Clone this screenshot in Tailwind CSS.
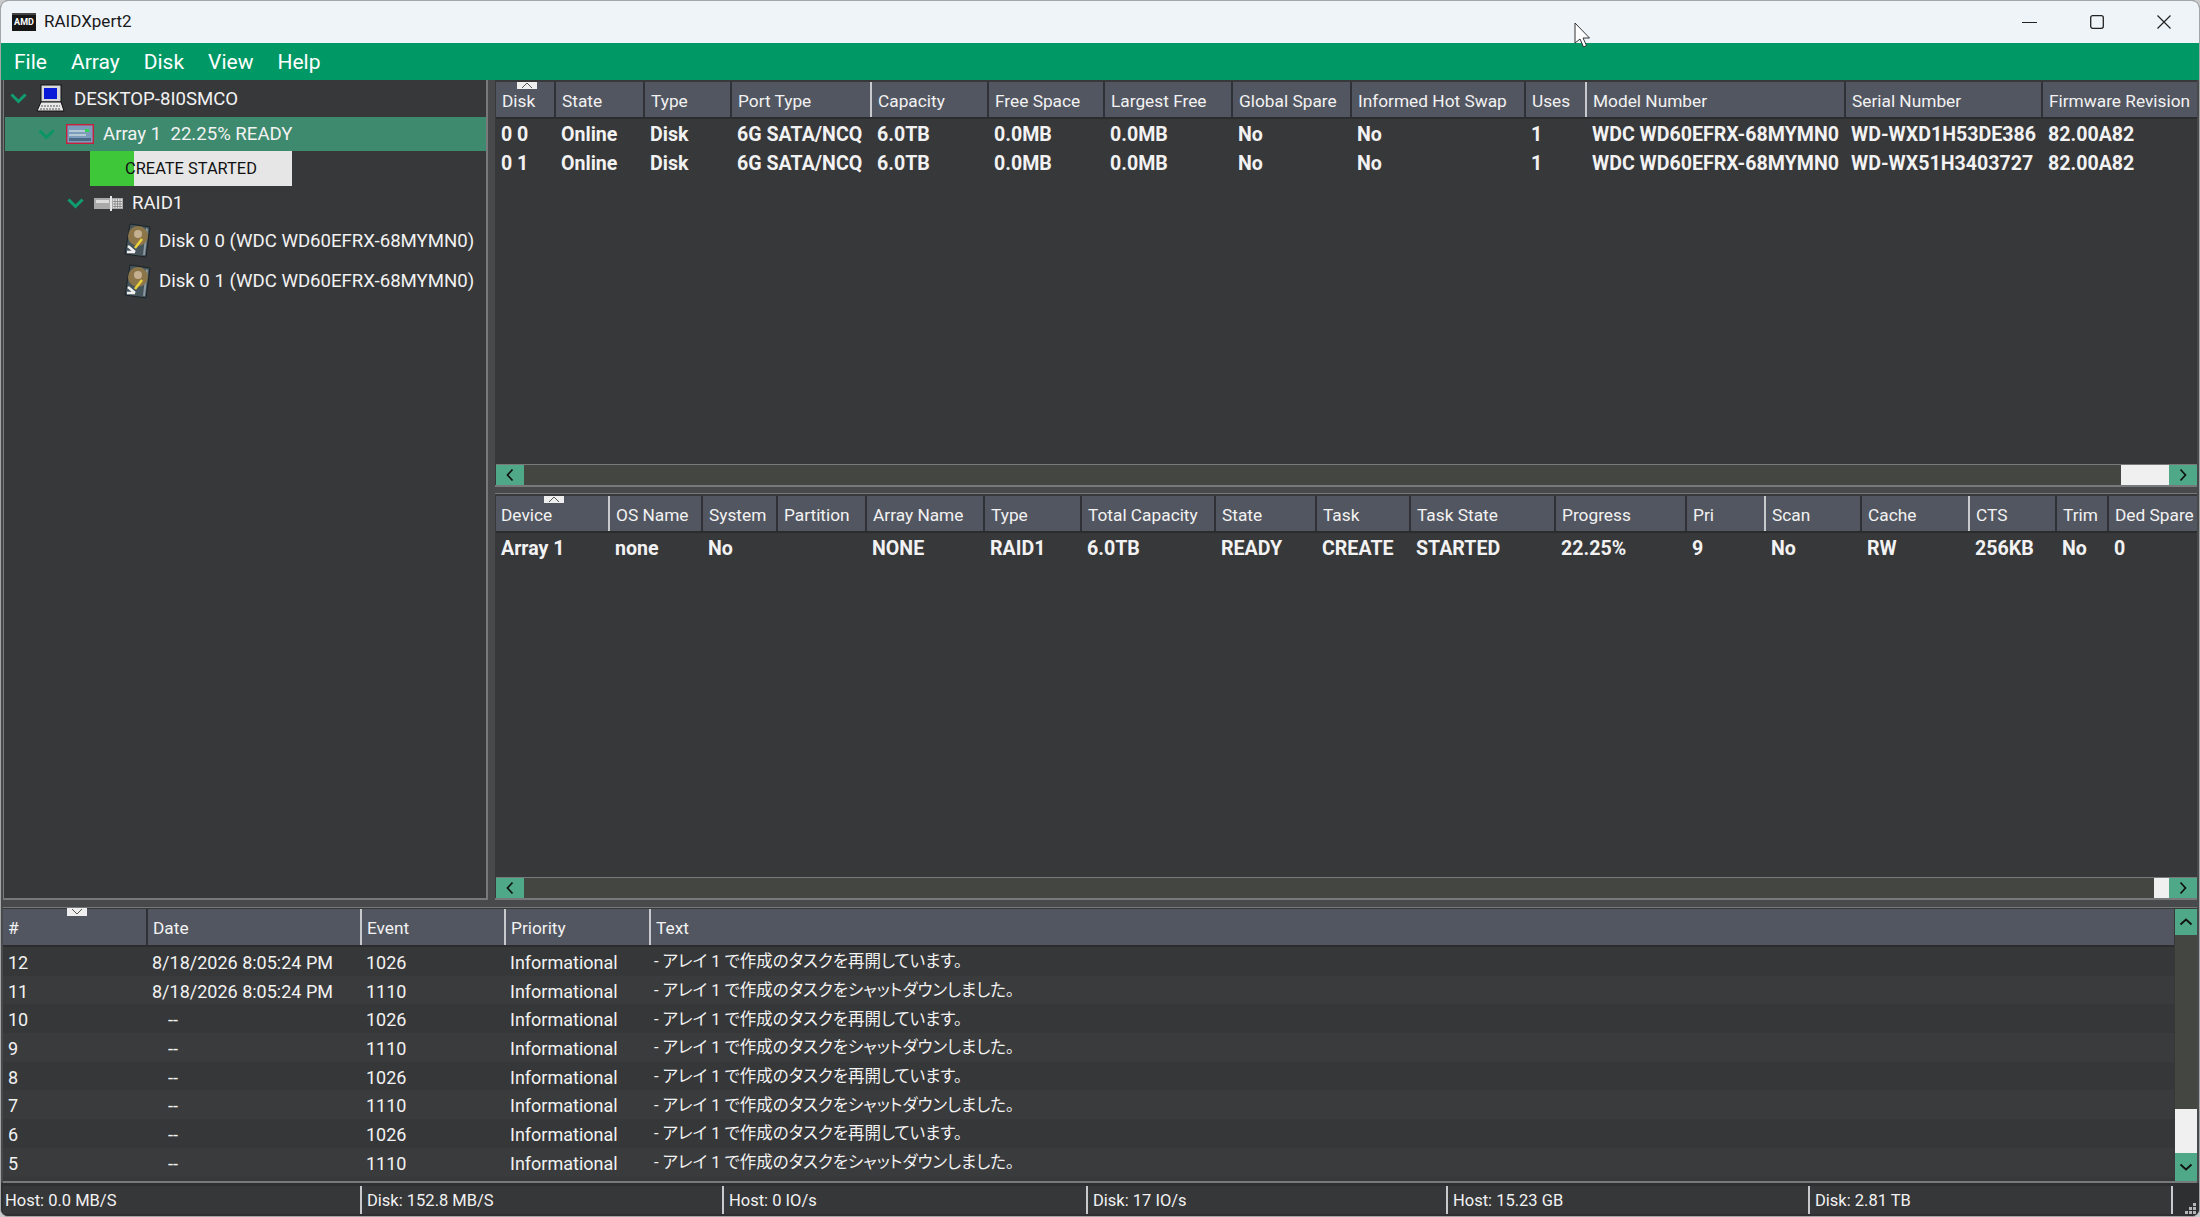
<!DOCTYPE html>
<html lang="en">
  <head>
    <meta charset="UTF-8" />
    <title>RAIDXpert2</title>
    <script src="https://cdn.jsdelivr.net/npm/@tailwindcss/browser@4"></script>
  </head>
  <body class="bg-[#c9cacb]">
    <div class="relative flex flex-col h-[1217px] w-[2200px] overflow-hidden rounded-lg border border-[#a4a5a6] bg-[#47494a] font-['Roboto','Noto_Sans_CJK_JP',sans-serif] text-[17.3px] text-[#f2f2f2]">
      <!-- title bar -->
      <div class="flex items-center h-[42px] shrink-0 bg-[#eff4f9] pl-[11px] text-[#1a1a1a]">
        <div class="flex items-center justify-center w-[24px] h-[18px] bg-[#161616] border-t-2 border-[#444] text-[9px] font-bold text-white">AMD</div>
        <span class="ml-[8px] text-[17px]">RAIDXpert2</span>
        <div class="ml-auto flex items-center pr-[28px] gap-[53px]">
          <svg class="w-[15px] h-[14px]" viewBox="0 0 15 14"><path d="M0 7.5h15" stroke="#222" stroke-width="1.2" /></svg>
          <svg class="w-[14px] h-[14px]" viewBox="0 0 14 14"><rect x="0.7" y="0.7" width="12.6" height="12.6" rx="2" fill="none" stroke="#222" stroke-width="1.3" /></svg>
          <svg class="w-[14px] h-[14px]" viewBox="0 0 14 14"><path d="M0.5 0.5l13 13M13.5 0.5l-13 13" stroke="#222" stroke-width="1.2" /></svg>
        </div>
      </div>
      <!-- mouse cursor -->
      <svg class="absolute left-[1573px] top-[21px] w-[18px] h-[27px]" viewBox="0 0 18 27"><path d="M1 1v20l5-4 3.500 8 3-1.500-3.500-7.500h6.500z" fill="#fff" stroke="#333" stroke-width="1" /></svg>
      <!-- menu -->
      <div class="flex items-center h-[37px] shrink-0 bg-[#009966] pl-[13px] pt-[2px] gap-[24px] text-[21px] text-white">
        <span>File</span><span>Array</span><span>Disk</span><span>View</span><span>Help</span>
      </div>
      <!-- upper panes -->
      <div class="flex h-[820px] shrink-0 pl-[2px] pr-[2px]">
        <!-- tree -->
        <div class="w-[485px] shrink-0 h-full border-r-2 border-b-2 border-l border-[#77797a] bg-[#37383a] text-[18.6px]">
          <div class="flex items-center h-[37px] pl-[6px]">
            <svg class="w-[17px] h-[11px]" viewBox="0 0 17 11"><path d="M1.500 1.500l7 7 7-7" fill="none" stroke="#0f9e70" stroke-width="3" /></svg>
            <svg class="ml-[9px] w-[29px] h-[29px]" viewBox="0 0 29 29">
              <rect x="5" y="1" width="20" height="17" fill="#d8d8d8" stroke="#111" />
              <rect x="8" y="4" width="13" height="11" fill="#0a18d8" />
              <path d="M5 18h20l3 9H1z" fill="#e8e8e8" stroke="#111" />
              <path d="M5 22h19M4 25h21" stroke="#555" stroke-dasharray="2 1" />
            </svg>
            <span class="ml-[9px] pt-[2px]">DESKTOP-8I0SMCO</span>
          </div>
          <div class="flex items-center h-[34px] ml-[1px] pl-[33px] bg-[#3e8a6e]">
            <svg class="w-[17px] h-[11px]" viewBox="0 0 17 11"><path d="M1.500 1.500l7 7 7-7" fill="none" stroke="#0a9566" stroke-width="3" /></svg>
            <svg class="ml-[11px] w-[28px] h-[20px]" viewBox="0 0 28 20">
              <rect x="0.700" y="0.700" width="26.600" height="18.600" fill="#7b9dbb" stroke="#c8203c" stroke-width="1.400" />
              <path d="M3 7h20M3 11h17" stroke="#c9d6e2" stroke-width="1.500" />
              <rect x="3" y="14" width="22" height="3" fill="#4a6a88" />
              <rect x="19" y="5" width="4" height="3" fill="#35d05a" />
            </svg>
            <span class="ml-[9px] pt-[2px]">Array 1&nbsp; 22.25% READY</span>
          </div>
          <div class="relative flex items-center justify-center h-[35px] w-[202px] ml-[86px] bg-[#e6e6e6] text-[#111] text-[16.4px]">
            <div class="absolute left-0 top-0 h-full bg-[#3fc73a]" style="width: 22%"></div>
            <span class="relative pt-[2px]">CREATE STARTED</span>
          </div>
          <div class="flex items-center h-[34px] pl-[63px]">
            <svg class="w-[17px] h-[11px]" viewBox="0 0 17 11"><path d="M1.500 1.500l7 7 7-7" fill="none" stroke="#0f9e70" stroke-width="3" /></svg>
            <svg class="ml-[10px] w-[29px] h-[16px]" viewBox="0 0 29 16">
              <rect x="0" y="3" width="29" height="11" fill="#a9a9a9" />
              <rect x="2" y="5" width="13" height="3" fill="#dcdcdc" />
              <rect x="16" y="1" width="2" height="15" fill="#e6e6e6" />
              <rect x="19" y="4" width="9" height="9" fill="#e0e0e0" />
              <path d="M19 6.500h9M19 9h9M19 11.500h9M21 4v9M23.500 4v9M26 4v9" stroke="#777" stroke-width="0.700" />
            </svg>
            <span class="ml-[9px] pt-[2px]">RAID1</span>
          </div>
          <div class="flex items-center h-[41px] pl-[120px]">
            <svg class="w-[27px] h-[35px]" viewBox="0 0 27 35">
              <path d="M6 1l20 3-4 30L1 31z" fill="#46555c" stroke="#1c2328" stroke-width="1" />
              <path d="M22 5l2 1-3 26-2 0z" fill="#8a9aa0" />
              <circle cx="14" cy="13" r="10" fill="#8c7548" />
              <circle cx="14" cy="11" r="4" fill="#c4b090" />
              <path d="M18 16l-7 9" stroke="#ecd23a" stroke-width="2.500" />
              <path d="M4 23l7 6M3 29h8" stroke="#f0f0f0" stroke-width="2.500" />
            </svg>
            <span class="ml-[8px] pt-[2px]">Disk 0 0 (WDC WD60EFRX-68MYMN0)</span>
          </div>
          <div class="flex items-center h-[40px] pl-[120px]">
            <svg class="w-[27px] h-[35px]" viewBox="0 0 27 35">
              <path d="M6 1l20 3-4 30L1 31z" fill="#46555c" stroke="#1c2328" stroke-width="1" />
              <path d="M22 5l2 1-3 26-2 0z" fill="#8a9aa0" />
              <circle cx="14" cy="13" r="10" fill="#8c7548" />
              <circle cx="14" cy="11" r="4" fill="#c4b090" />
              <path d="M18 16l-7 9" stroke="#ecd23a" stroke-width="2.500" />
              <path d="M4 23l7 6M3 29h8" stroke="#f0f0f0" stroke-width="2.500" />
            </svg>
            <span class="ml-[8px] pt-[2px]">Disk 0 1 (WDC WD60EFRX-68MYMN0)</span>
          </div>
        </div>
        <!-- right column -->
        <div class="flex flex-col flex-1 min-w-0 ml-[7px] h-full">
          <!-- disks pane -->
          <div class="relative flex flex-col h-[407px] pt-[2px] border-b-2 border-[#77797a] bg-[#37383a]">
            <svg class="absolute left-[22px] top-[2px] w-[20px] h-[7px]" viewBox="0 0 20 7"><rect width="20" height="7" fill="#eee" /><path d="M5 6l5-5 5 5" fill="none" stroke="#555" /></svg>
            <div class="grid grid-cols-[60px_89px_87px_140px_117px_116px_128px_119px_174px_61px_259px_197px_153px] h-[37px] shrink-0 ml-[1px] bg-[#525661] border-b-2 border-[#2b2c2e] whitespace-nowrap">
              <div class="pl-[6px] pt-[7px] border-r-2 border-[#2f3136]">Disk</div>
              <div class="pl-[6px] pt-[7px] border-r-2 border-[#2f3136]">State</div>
              <div class="pl-[6px] pt-[7px] border-r-2 border-[#2f3136]">Type</div>
              <div class="pl-[6px] pt-[7px] border-r-2 border-[#c8c9cc]">Port Type</div>
              <div class="pl-[6px] pt-[7px] border-r-2 border-[#2f3136]">Capacity</div>
              <div class="pl-[6px] pt-[7px] border-r-2 border-[#2f3136]">Free Space</div>
              <div class="pl-[6px] pt-[7px] border-r-2 border-[#2f3136]">Largest Free</div>
              <div class="pl-[6px] pt-[7px] border-r-2 border-[#2f3136]">Global Spare</div>
              <div class="pl-[6px] pt-[7px] border-r-2 border-[#2f3136]">Informed Hot Swap</div>
              <div class="pl-[6px] pt-[7px] border-r-2 border-[#c8c9cc]">Uses</div>
              <div class="pl-[6px] pt-[7px] border-r-2 border-[#2f3136]">Model Number</div>
              <div class="pl-[6px] pt-[7px] border-r-2 border-[#2f3136]">Serial Number</div>
              <div class="pl-[6px] pt-[7px]">Firmware Revision</div>
            </div>
            <div class="flex-1 pt-[1px] font-bold text-[19.6px]">
              <div class="grid grid-cols-[60px_89px_87px_140px_117px_116px_128px_119px_174px_61px_259px_197px_153px] h-[29px] items-center ml-[1px] whitespace-nowrap pl-[5px]">
                <div>0 0</div><div>Online</div><div>Disk</div><div>6G SATA/NCQ</div><div>6.0TB</div><div>0.0MB</div><div>0.0MB</div><div>No</div><div>No</div><div>1</div><div>WDC WD60EFRX-68MYMN0</div><div>WD-WXD1H53DE386</div><div>82.00A82</div>
              </div>
              <div class="grid grid-cols-[60px_89px_87px_140px_117px_116px_128px_119px_174px_61px_259px_197px_153px] h-[29px] items-center ml-[1px] whitespace-nowrap pl-[5px]">
                <div>0 1</div><div>Online</div><div>Disk</div><div>6G SATA/NCQ</div><div>6.0TB</div><div>0.0MB</div><div>0.0MB</div><div>No</div><div>No</div><div>1</div><div>WDC WD60EFRX-68MYMN0</div><div>WD-WX51H3403727</div><div>82.00A82</div>
              </div>
            </div>
            <div class="flex h-[21px] shrink-0 ml-[1px] border-t border-[#77797a] bg-[#444641]">
              <div class="flex items-center justify-center w-[28px] bg-[#4fa888]"><svg class="w-[10px] h-[14px]" viewBox="0 0 10 14"><path d="M7.500 1.500L2.500 7l5 5.500" fill="none" stroke="#111" stroke-width="1.700" /></svg></div>
              <div class="flex-1"></div>
              <div class="w-[48px] bg-[#f0f0f0]"></div>
              <div class="flex items-center justify-center w-[28px] bg-[#4fa888]"><svg class="w-[10px] h-[14px]" viewBox="0 0 10 14"><path d="M2.500 1.500L7.500 7l-5 5.500" fill="none" stroke="#111" stroke-width="1.700" /></svg></div>
            </div>
          </div>
          <!-- arrays pane -->
          <div class="relative flex flex-col flex-1 mt-[6px] pt-[2px] border-t border-[#77797a] border-b-2 bg-[#37383a]">
            <svg class="absolute left-[49px] top-[2px] w-[20px] h-[7px]" viewBox="0 0 20 7"><rect width="20" height="7" fill="#eee" /><path d="M5 6l5-5 5 5" fill="none" stroke="#555" /></svg>
            <div class="grid grid-cols-[114px_93px_75px_89px_118px_97px_134px_101px_94px_145px_131px_79px_96px_108px_87px_52px_87px] h-[37px] shrink-0 ml-[1px] bg-[#525661] border-b-2 border-[#2b2c2e] whitespace-nowrap">
              <div class="pl-[5px] pt-[7px] border-r-2 border-[#c8c9cc]">Device</div>
              <div class="pl-[6px] pt-[7px] border-r-2 border-[#2f3136]">OS Name</div>
              <div class="pl-[6px] pt-[7px] border-r-2 border-[#2f3136]">System</div>
              <div class="pl-[6px] pt-[7px] border-r-2 border-[#2f3136]">Partition</div>
              <div class="pl-[6px] pt-[7px] border-r-2 border-[#2f3136]">Array Name</div>
              <div class="pl-[6px] pt-[7px] border-r-2 border-[#2f3136]">Type</div>
              <div class="pl-[6px] pt-[7px] border-r-2 border-[#2f3136]">Total Capacity</div>
              <div class="pl-[6px] pt-[7px] border-r-2 border-[#2f3136]">State</div>
              <div class="pl-[6px] pt-[7px] border-r-2 border-[#2f3136]">Task</div>
              <div class="pl-[6px] pt-[7px] border-r-2 border-[#2f3136]">Task State</div>
              <div class="pl-[6px] pt-[7px] border-r-2 border-[#2f3136]">Progress</div>
              <div class="pl-[6px] pt-[7px] border-r-2 border-[#c8c9cc]">Pri</div>
              <div class="pl-[6px] pt-[7px] border-r-2 border-[#2f3136]">Scan</div>
              <div class="pl-[6px] pt-[7px] border-r-2 border-[#c8c9cc]">Cache</div>
              <div class="pl-[6px] pt-[7px] border-r-2 border-[#2f3136]">CTS</div>
              <div class="pl-[6px] pt-[7px] border-r-2 border-[#2f3136]">Trim</div>
              <div class="pl-[6px] pt-[7px]">Ded Spare</div>
            </div>
            <div class="flex-1 pt-[1px] font-bold text-[19.6px]">
              <div class="grid grid-cols-[114px_93px_75px_89px_118px_97px_134px_101px_94px_145px_131px_79px_96px_108px_87px_52px_87px] h-[29px] items-center ml-[1px] pl-[5px] whitespace-nowrap">
                <div>Array 1</div><div>none</div><div>No</div><div></div><div>NONE</div><div>RAID1</div><div>6.0TB</div><div>READY</div><div>CREATE</div><div>STARTED</div><div>22.25%</div><div>9</div><div>No</div><div>RW</div><div>256KB</div><div>No</div><div>0</div>
              </div>
            </div>
            <div class="flex h-[21px] shrink-0 ml-[1px] border-t border-[#77797a] bg-[#444641]">
              <div class="flex items-center justify-center w-[28px] bg-[#4fa888]"><svg class="w-[10px] h-[14px]" viewBox="0 0 10 14"><path d="M7.500 1.500L2.500 7l5 5.500" fill="none" stroke="#111" stroke-width="1.700" /></svg></div>
              <div class="flex-1"></div>
              <div class="w-[15px] bg-[#f0f0f0]"></div>
              <div class="flex items-center justify-center w-[28px] bg-[#4fa888]"><svg class="w-[10px] h-[14px]" viewBox="0 0 10 14"><path d="M2.500 1.500L7.500 7l-5 5.500" fill="none" stroke="#111" stroke-width="1.700" /></svg></div>
            </div>
          </div>
        </div>
      </div>
      <!-- log pane -->
      <div class="relative flex mt-[7px] h-[276px] shrink-0 ml-[2px] mr-[2px] border-t border-b-2 border-[#77797a] bg-[#37383a]">
        <svg class="absolute left-[64px] top-0 w-[20px] h-[8px]" viewBox="0 0 20 8"><rect width="20" height="8" fill="#eee" /><path d="M5 1l5 5 5-5" fill="none" stroke="#555" /></svg>
        <div class="flex flex-col flex-1 min-w-0">
          <div class="grid grid-cols-[145px_214px_144px_145px_1fr] h-[38px] shrink-0 bg-[#525661] border-b-2 border-[#2b2c2e] mt-[1px]">
            <div class="pl-[5px] pt-[7px] border-r-2 border-[#2f3136]">#</div>
            <div class="pl-[5px] pt-[7px] border-r-2 border-[#c8c9cc]">Date</div>
            <div class="pl-[5px] pt-[7px] border-r-2 border-[#c8c9cc]">Event</div>
            <div class="pl-[5px] pt-[7px] border-r-2 border-[#c8c9cc]">Priority</div>
            <div class="pl-[5px] pt-[7px]">Text</div>
          </div>
          <div class="flex-1 overflow-hidden text-[18px]">
            <div class="grid grid-cols-[144px_214px_144px_144px_1fr] h-[28.7px] pt-[2px] items-center bg-[#363739] pl-[5px]"><div>12</div><div>8/18/2026 8:05:24 PM</div><div>1026</div><div>Informational</div><div class="text-[16.5px] [font-feature-settings:'palt']">- アレイ 1 で作成のタスクを再開しています。</div></div>
            <div class="grid grid-cols-[144px_214px_144px_144px_1fr] h-[28.7px] pt-[2px] items-center bg-[#3a3b3d] pl-[5px]"><div>11</div><div>8/18/2026 8:05:24 PM</div><div>1110</div><div>Informational</div><div class="text-[16.5px] [font-feature-settings:'palt']">- アレイ 1 で作成のタスクをシャットダウンしました。</div></div>
            <div class="grid grid-cols-[144px_214px_144px_144px_1fr] h-[28.7px] pt-[2px] items-center bg-[#363739] pl-[5px]"><div>10</div><div class="pl-[16px]">--</div><div>1026</div><div>Informational</div><div class="text-[16.5px] [font-feature-settings:'palt']">- アレイ 1 で作成のタスクを再開しています。</div></div>
            <div class="grid grid-cols-[144px_214px_144px_144px_1fr] h-[28.7px] pt-[2px] items-center bg-[#3a3b3d] pl-[5px]"><div>9</div><div class="pl-[16px]">--</div><div>1110</div><div>Informational</div><div class="text-[16.5px] [font-feature-settings:'palt']">- アレイ 1 で作成のタスクをシャットダウンしました。</div></div>
            <div class="grid grid-cols-[144px_214px_144px_144px_1fr] h-[28.7px] pt-[2px] items-center bg-[#363739] pl-[5px]"><div>8</div><div class="pl-[16px]">--</div><div>1026</div><div>Informational</div><div class="text-[16.5px] [font-feature-settings:'palt']">- アレイ 1 で作成のタスクを再開しています。</div></div>
            <div class="grid grid-cols-[144px_214px_144px_144px_1fr] h-[28.7px] pt-[2px] items-center bg-[#3a3b3d] pl-[5px]"><div>7</div><div class="pl-[16px]">--</div><div>1110</div><div>Informational</div><div class="text-[16.5px] [font-feature-settings:'palt']">- アレイ 1 で作成のタスクをシャットダウンしました。</div></div>
            <div class="grid grid-cols-[144px_214px_144px_144px_1fr] h-[28.7px] pt-[2px] items-center bg-[#363739] pl-[5px]"><div>6</div><div class="pl-[16px]">--</div><div>1026</div><div>Informational</div><div class="text-[16.5px] [font-feature-settings:'palt']">- アレイ 1 で作成のタスクを再開しています。</div></div>
            <div class="grid grid-cols-[144px_214px_144px_144px_1fr] h-[28.7px] pt-[2px] items-center bg-[#3a3b3d] pl-[5px]"><div>5</div><div class="pl-[16px]">--</div><div>1110</div><div>Informational</div><div class="text-[16.5px] [font-feature-settings:'palt']">- アレイ 1 で作成のタスクをシャットダウンしました。</div></div>
          </div>
        </div>
        <div class="flex flex-col w-[22px] shrink-0 ml-[1px] mt-[1px] bg-[#444641]">
          <div class="flex items-center justify-center h-[26px] bg-[#4fa888]"><svg class="w-[14px] h-[10px]" viewBox="0 0 14 10"><path d="M1.500 7.500L7 2.500l5.500 5" fill="none" stroke="#111" stroke-width="1.800" /></svg></div>
          <div class="flex-1"></div>
          <div class="h-[44px] bg-[#f0f0f0]"></div>
          <div class="flex items-center justify-center h-[28px] bg-[#4fa888]"><svg class="w-[14px] h-[10px]" viewBox="0 0 14 10"><path d="M1.500 2.500L7 7.500l5.500-5" fill="none" stroke="#111" stroke-width="1.800" /></svg></div>
        </div>
      </div>
      <!-- status bar -->
      <div class="relative grid grid-cols-[359px_362px_364px_360px_362px_363px_1fr] flex-1 pl-[2px] py-[3px] bg-[#2e2f31] text-[16.5px]">
        <div class="flex items-center pl-[2px] pt-[3px] bg-[#363739] border-r-2 border-[#c8c9cc]">Host: 0.0 MB/S</div>
        <div class="flex items-center pl-[5px] pt-[3px] bg-[#363739] border-r-2 border-[#c8c9cc]">Disk: 152.8 MB/S</div>
        <div class="flex items-center pl-[5px] pt-[3px] bg-[#363739] border-r-2 border-[#c8c9cc]">Host: 0 IO/s</div>
        <div class="flex items-center pl-[5px] pt-[3px] bg-[#363739] border-r-2 border-[#c8c9cc]">Disk: 17 IO/s</div>
        <div class="flex items-center pl-[5px] pt-[3px] bg-[#363739] border-r-2 border-[#c8c9cc]">Host: 15.23 GB</div>
        <div class="flex items-center pl-[5px] pt-[3px] bg-[#363739] border-r-2 border-[#c8c9cc]">Disk: 2.81 TB</div>
        <div></div>
        <svg class="absolute right-[2px] bottom-[2px] w-[12px] h-[12px]" viewBox="0 0 12 12"><path d="M8 0h3v3H8zM4 4h3v3H4zM8 4h3v3H8zM0 8h3v3H0zM4 8h3v3H4zM8 8h3v3H8z" fill="#b5b6b7" /></svg>
      </div>
    </div>
  </body>
</html>
